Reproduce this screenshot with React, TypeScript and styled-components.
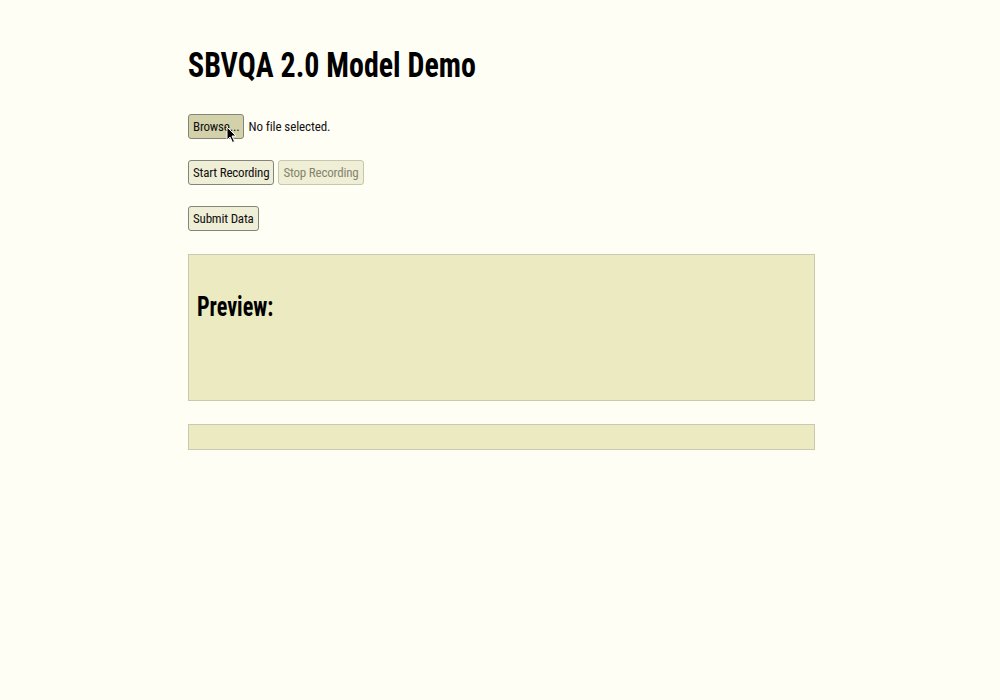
import React from "react";
import styled, { createGlobalStyle } from "styled-components";

const GlobalStyle = createGlobalStyle`
  html, body {
    margin: 0;
    padding: 0;
    background: #fefef5;
  }
  body {
    font-family: Roboto, "Liberation Sans", Arial, sans-serif;
    font-stretch: 75%;
    color: #111;
  }
`;

const Page = styled.div`
  min-height: 700px;
  padding: 46px 0 0 3px;
  box-sizing: border-box;
`;

const Container = styled.main`
  width: 627px;
  margin: 0 auto;
  display: flex;
  flex-direction: column;
`;

// the reference font is narrower than any installed face, so squeeze headings
const Squeezed = styled.span<{ $x: number }>`
  display: inline-block;
  transform: scaleX(${(p) => p.$x});
  transform-origin: left center;
  white-space: nowrap;
`;

const Title = styled.h1`
  margin: 0 0 28px;
  font-size: 35px;
  line-height: 40px;
  font-weight: 700;
  color: #000;
`;

const Row = styled.div`
  display: flex;
  align-items: center;
  gap: 4px;
  margin-bottom: 21px;
`;

const Button = styled.button<{ $hover?: boolean }>`
  position: relative;
  height: 25px;
  padding: 0 4px;
  font-family: inherit;
  font-stretch: 75%;
  font-size: 13px;
  letter-spacing: -0.2px;
  color: ${(p) => (p.disabled ? "#85856c" : "#111")};
  background: ${(p) => (p.$hover ? "#d3d1a9" : "#efeed6")};
  border: 1px solid ${(p) => (p.disabled ? "#c8c7aa" : "#85847a")};
  border-radius: 3px;
`;

const FileName = styled.span`
  font-size: 13px;
  letter-spacing: -0.1px;
  color: #111;
`;

const Cursor = styled.svg`
  position: absolute;
  left: 37px;
  top: 11px;
`;

const Panel = styled.section<{ $tall?: boolean }>`
  box-sizing: border-box;
  height: ${(p) => (p.$tall ? "147px" : "26px")};
  margin-top: 2px;
  margin-bottom: 21px;
  padding: 0 8px;
  background: #ebeac0;
  border: 1px solid #c9c8b0;
  display: flex;
  align-items: flex-start;
`;

const PanelTitle = styled.h2`
  margin: 36px 0 0;
  font-size: 27px;
  line-height: 32px;
  font-weight: 700;
  color: #000;
`;

export default function App() {
  return (
    <Page>
      <GlobalStyle />
      <Container>
        <Title>
          <Squeezed $x={0.855}>SBVQA 2.0 Model Demo</Squeezed>
        </Title>
        <Row>
          <Button $hover>
            Browse...
            <Cursor width="12" height="18" viewBox="0 0 12 18">
              <path
                d="M1 1 L1 14 L4 11 L6.5 16.5 L8.5 15.5 L6 10 L10 10 Z"
                fill="#000"
                stroke="#fff"
                strokeWidth="1"
              />
            </Cursor>
          </Button>
          <FileName>No file selected.</FileName>
        </Row>
        <Row>
          <Button>Start Recording</Button>
          <Button disabled>Stop Recording</Button>
        </Row>
        <Row>
          <Button>Submit Data</Button>
        </Row>
        <Panel $tall>
          <PanelTitle>
            <Squeezed $x={0.82}>Preview:</Squeezed>
          </PanelTitle>
        </Panel>
        <Panel />
      </Container>
    </Page>
  );
}
